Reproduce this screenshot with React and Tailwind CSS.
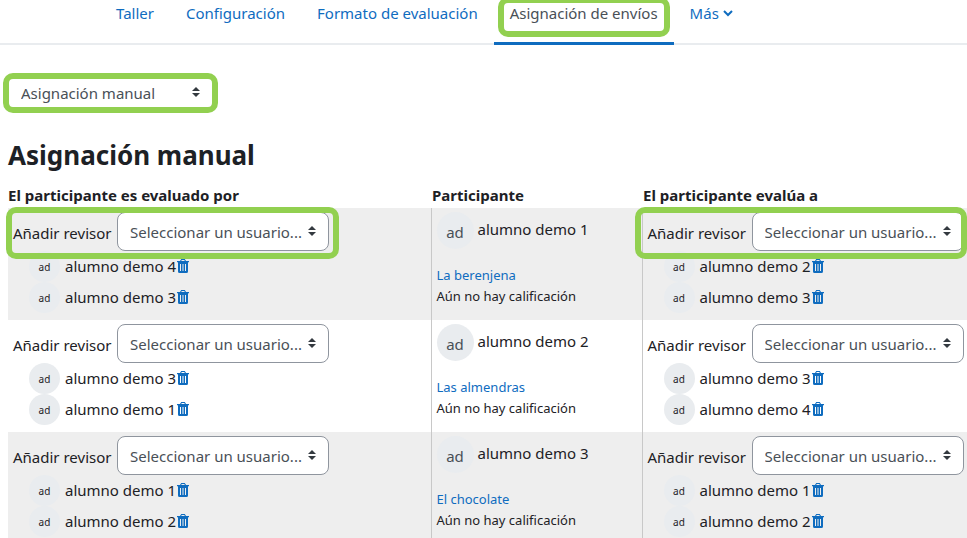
const tabs = [
  { label: "Taller" },
  { label: "Configuración" },
  { label: "Formato de evaluación" },
  { label: "Asignación de envíos", active: true },
];

const rows = [
  {
    id: 1,
    name: "alumno demo 1",
    title: "La berenjena",
    reviewedBy: ["alumno demo 4", "alumno demo 3"],
    reviewerOf: ["alumno demo 2", "alumno demo 3"],
    marked: true,
  },
  {
    id: 2,
    name: "alumno demo 2",
    title: "Las almendras",
    reviewedBy: ["alumno demo 3", "alumno demo 1"],
    reviewerOf: ["alumno demo 3", "alumno demo 4"],
  },
  {
    id: 3,
    name: "alumno demo 3",
    title: "El chocolate",
    reviewedBy: ["alumno demo 1", "alumno demo 2"],
    reviewerOf: ["alumno demo 1", "alumno demo 2"],
  },
];

// Green frame drawn over the control it points out
function Marker({ className }) {
  return (
    <span
      className={`pointer-events-none absolute z-10 rounded-[10px] border-6 border-[#92d050] ${className}`}
      aria-hidden="true"
    />
  );
}

function Select({ id, label, option, className }) {
  return (
    <span className={`relative block ${className}`}>
      <select
        id={id}
        aria-label={label}
        className="block h-[39px] w-full appearance-none rounded-lg border border-[#8f959e] bg-white pl-3 pr-6 pt-px text-[#495057]"
      >
        <option>{option}</option>
      </select>
      <svg
        viewBox="0 0 8 10"
        className="pointer-events-none absolute right-[13px] top-[14px] h-[10px] w-2 fill-[#343a40]"
        aria-hidden="true"
      >
        <path d="M4 0 8 4H0zM4 10 0 6h8z" />
      </svg>
    </span>
  );
}

function TrashIcon() {
  return (
    <svg viewBox="0 0 12 14" className="h-[14px] w-3" aria-hidden="true">
      <path
        fill="#0f6cbf"
        fillRule="evenodd"
        d="M4.200 0h3.600l1.200 2h3v1.200h-1v9.300a1.500 1.500 0 0 1-1.500 1.500h-7A1.500 1.500 0 0 1 1 12.500V3.200H0V2h3zM4.700 1 4.200 2h3.600l-.5-1zM3 5v7h1V5zm2.500 0v7h1V5zM8 5v7h1V5z"
      />
    </svg>
  );
}

function Reviews({ id, people, marker }) {
  return (
    <>
      <div className="relative flex w-[316px] items-center justify-between">
        <label htmlFor={id} className="pt-[2px]">
          Añadir revisor
        </label>
        <Select id={id} option="Seleccionar un usuario..." className="w-[212px]" />
        {marker && <Marker className={marker} />}
      </div>
      <ul className="pl-4">
        {people.map((person) => (
          <li key={person} className="flex h-[31px] items-center">
            <span className="mr-[5px] flex size-[31px] items-center justify-center rounded-full bg-[#e9ecef] pt-px text-[10px]">
              ad
            </span>
            <span className="flex items-center gap-px pb-[2px]">
              {person}
              <button type="button" aria-label={`Quitar ${person}`}>
                <TrashIcon />
              </button>
            </span>
          </li>
        ))}
      </ul>
    </>
  );
}

export default function App() {
  return (
    <div className="h-screen overflow-hidden bg-white font-['Noto_Sans','Open_Sans',sans-serif] text-[15px] leading-5 text-[#1d2125]">
      <nav className="flex h-[45px] border-b-2 border-[#e9ecef] pl-[100px] text-[#0f6cbf]">
        {tabs.map((tab) => (
          <a
            key={tab.label}
            href="#"
            aria-current={tab.active ? "page" : undefined}
            className={
              tab.active
                ? "relative h-[45px] border-b-3 border-[#0f6cbf] px-4 pt-[3px] text-[#495057]"
                : "px-4 pt-[3px]"
            }
          >
            {tab.label}
            {tab.active && <Marker className="inset-x-1 -top-[3px] h-10" />}
          </a>
        ))}
        <a href="#" className="flex h-[23px] items-center gap-1 px-4 pt-[3px]">
          Más
          <svg
            viewBox="0 0 10 7"
            className="h-[7px] w-[10px] fill-none stroke-current stroke-2"
            aria-hidden="true"
          >
            <path d="m1 1 4 4 4-4" />
          </svg>
        </a>
      </nav>

      <main className="pl-2 pt-7">
        <div className="relative w-[205px]">
          <Select label="Tipo de asignación" option="Asignación manual" className="w-full" />
          <Marker className="-inset-x-[5px] -bottom-px top-0" />
        </div>

        <h2 className="mt-[27px] text-[26px] font-bold leading-8">Asignación manual</h2>

        <table className="mt-3 w-full table-fixed">
          <thead>
            <tr className="h-[25px] text-left">
              <th className="w-[423px] pb-[2px]">El participante es evaluado por</th>
              <th className="w-[211px] pb-[2px] pl-px">Participante</th>
              <th className="pb-[2px] pl-px">El participante evalúa a</th>
            </tr>
          </thead>
          <tbody>
            {rows.map((row) => (
              <tr key={row.id} className="h-[112px] align-top odd:bg-[#eeeeee]">
                <td className="pl-[5px] pt-1">
                  <Reviews
                    id={`by-${row.id}`}
                    people={row.reviewedBy}
                    marker={row.marked && "-left-[7px] -right-[10px] -top-[5px] -bottom-2"}
                  />
                </td>
                <td className="border-x border-[#c8c8c8] pl-[5px] pt-1">
                  <div className="flex">
                    <span className="mr-1 flex size-[37px] items-center justify-center rounded-full bg-[#e9ecef] pt-[2px] text-[#495057]">
                      ad
                    </span>
                    <span className="pt-[7px]">{row.name}</span>
                  </div>
                  <div className="mt-4 text-[13px] leading-[21px]">
                    <a href="#" className="block text-[#0f6cbf]">
                      {row.title}
                    </a>
                    <p>Aún no hay calificación</p>
                  </div>
                </td>
                <td className="pl-[5px] pt-1">
                  <Reviews
                    id={`of-${row.id}`}
                    people={row.reviewerOf}
                    marker={row.marked && "-left-[13px] -right-[3px] -top-[5px] -bottom-2"}
                  />
                </td>
              </tr>
            ))}
          </tbody>
        </table>
      </main>
    </div>
  );
}
